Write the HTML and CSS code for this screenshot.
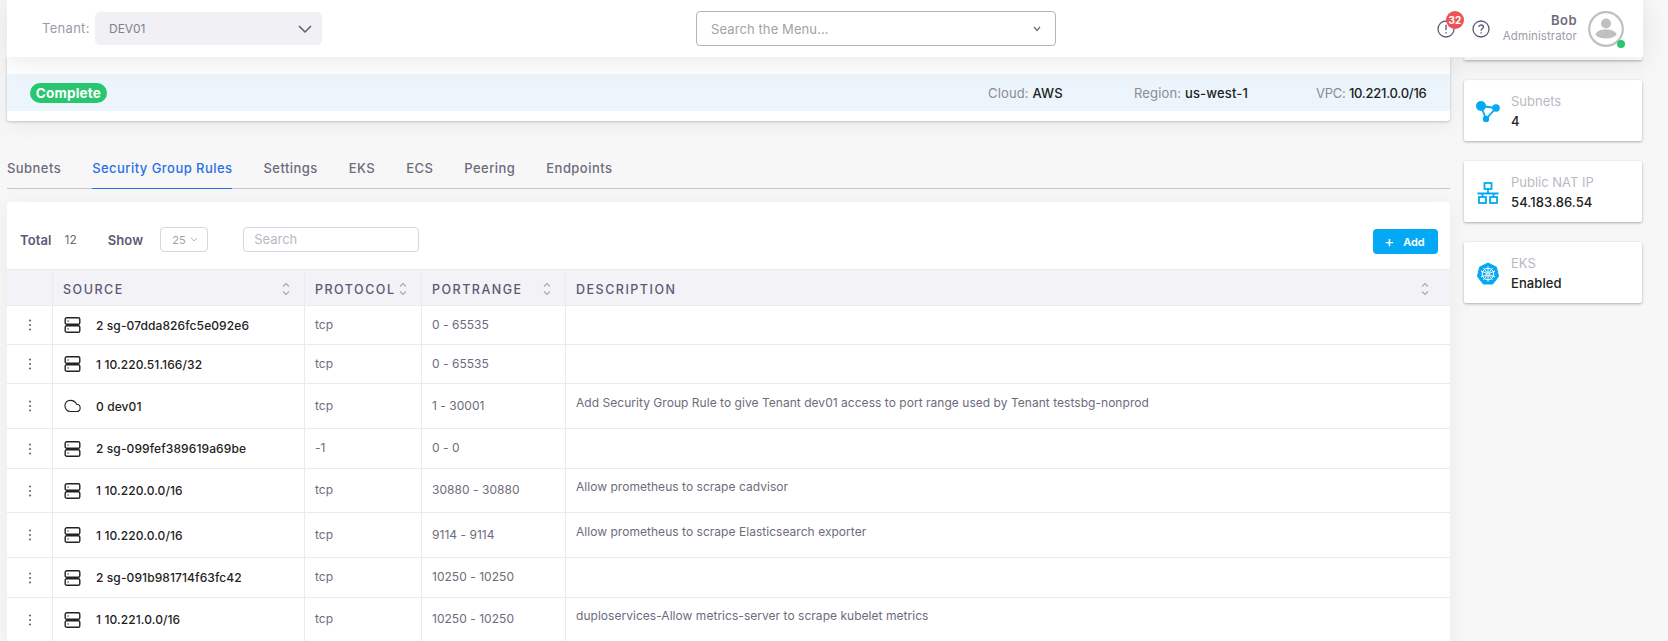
FILE: index.html
```html
<!DOCTYPE html>
<html lang="en">
<head>
<meta charset="UTF-8">
<meta name="viewport" content="width=device-width, initial-scale=1.0">
<title>VPC Details</title>
<link rel="stylesheet" href="styles.css">
</head>
<body>
<svg class="sprites" aria-hidden="true">
    <symbol id="server" viewBox="0 0 16 16">
        <rect x="0.7" y="0.7" width="14.6" height="6.6" rx="1.6" fill="none" stroke="currentColor" stroke-width="1.4"/>
        <rect x="0.7" y="8.7" width="14.6" height="6.6" rx="1.6" fill="none" stroke="currentColor" stroke-width="1.4"/>
        <rect x="3" y="3.4" width="1.2" height="1.2" fill="currentColor"/>
        <rect x="3" y="11.4" width="1.2" height="1.2" fill="currentColor"/>
    </symbol>
    <symbol id="cloud" viewBox="0 0 18 14">
        <path d="M6.5 1C3.4 1 1 3.6 1 6.8c0 3.3 2.5 6 5.6 6h6.6c2.2 0 3.9-1.7 3.9-3.8 0-2.1-1.6-3.7-3.7-3.8C12.400 2.700 9.800 1 6.500 1z" fill="none" stroke="currentColor" stroke-width="1.2"/>
    </symbol>
    <symbol id="dots" viewBox="0 0 4 14">
        <circle cx="2" cy="2.500" r="1.100" fill="currentColor"/>
        <circle cx="2" cy="7" r="1.100" fill="currentColor"/>
        <circle cx="2" cy="11.500" r="1.100" fill="currentColor"/>
    </symbol>
    <symbol id="sort" viewBox="0 0 8 14">
        <path d="M1 4.500L4 1.500L7 4.500M1 9.500L4 12.500L7 9.500" fill="none" stroke="currentColor" stroke-width="1.100"/>
    </symbol>
</svg>

<header class="topbar">
    <div class="tenant">
        <span class="tenant-label">Tenant:</span>
        <div class="tenant-select">
            <span>DEV01</span>
            <svg width="16" height="10" viewBox="0 0 16 10"><path d="M2 2l6 6 6-6" fill="none" stroke="#5e5873" stroke-width="1.500"/></svg>
        </div>
    </div>
    <div class="menu-search">
        <span>Search the Menu...</span>
        <svg width="8" height="6" viewBox="0 0 8 6"><path d="M1 1l3 3.500L7 1" fill="none" stroke="#6e6b7b" stroke-width="1.200"/></svg>
    </div>
    <div class="topbar-right">
        <div class="alert-icon">
            <svg width="18" height="18" viewBox="0 0 18 18"><circle cx="9" cy="9" r="8" fill="none" stroke="#5e5873" stroke-width="1.300"/><path d="M9 4.800v5.200M9 12.200v1.300" stroke="#5e5873" stroke-width="1.400"/></svg>
            <span class="badge">32</span>
        </div>
        <svg class="help-icon" width="18" height="18" viewBox="0 0 18 18"><circle cx="9" cy="9" r="8" fill="none" stroke="#5e5873" stroke-width="1.300"/><path d="M6.700 7c.2-1.300 1.200-2 2.400-2 1.300 0 2.300.8 2.300 2 0 1.800-2.400 1.800-2.400 3.800M9 12.300v1.300" fill="none" stroke="#5e5873" stroke-width="1.300"/></svg>
        <div class="user">
            <div class="user-name">Bob</div>
            <div class="user-role">Administrator</div>
        </div>
        <div class="avatar">
            <svg width="36" height="36" viewBox="0 0 36 36">
                <circle cx="18" cy="18" r="16.800" fill="none" stroke="#c0c0c0" stroke-width="2.200"/>
                <circle cx="18" cy="12.500" r="5" fill="#c0c0c0"/>
                <path d="M7.500 24c0-3.500 4.500-5.500 10.500-5.500s10.500 2 10.500 5.500c-2.500 2.500-6 3.500-10.500 3.500s-8-1-10.500-3.500z" fill="#c0c0c0"/>
            </svg>
            <span class="online"></span>
        </div>
    </div>
</header>

<div class="page">
    <main class="main">
        <section class="summary">
            <div class="summary-strip">
                <span class="status">Complete</span>
                <div class="summary-meta">
                    <span class="meta-cloud">Cloud: <b>AWS</b></span>
                    <span class="meta-region">Region: <b>us-west-1</b></span>
                    <span class="meta-vpc">VPC: <b>10.221.0.0/16</b></span>
                </div>
            </div>
        </section>

        <nav class="tabs">
            <a>Subnets</a>
            <a class="active">Security Group Rules</a>
            <a>Settings</a>
            <a>EKS</a>
            <a>ECS</a>
            <a>Peering</a>
            <a>Endpoints</a>
        </nav>

        <section class="table-card">
            <div class="toolbar">
                <span class="tool-label">Total</span>
                <span class="tool-count">12</span>
                <span class="tool-label tool-show">Show</span>
                <div class="page-size">
                    <span>25</span>
                    <svg width="8" height="5" viewBox="0 0 8 5"><path d="M1 1l3 3 3-3" fill="none" stroke="#b9b9c3"/></svg>
                </div>
                <div class="table-search">Search</div>
                <button class="add-btn"><span class="plus">+</span>Add</button>
            </div>
            <table>
                <colgroup>
                    <col class="col-menu">
                    <col class="col-source">
                    <col class="col-protocol">
                    <col class="col-port">
                    <col>
                </colgroup>
                <thead>
                    <tr>
                        <th></th>
                        <th><div class="th-in">SOURCE<svg class="sort"><use href="#sort"/></svg></div></th>
                        <th><div class="th-in">PROTOCOL<svg class="sort"><use href="#sort"/></svg></div></th>
                        <th><div class="th-in">PORTRANGE<svg class="sort"><use href="#sort"/></svg></div></th>
                        <th><div class="th-in th-last">DESCRIPTION<svg class="sort"><use href="#sort"/></svg></div></th>
                    </tr>
                </thead>
                <tbody>
                    <tr class="h39">
                        <td class="menu"><svg class="dots"><use href="#dots"/></svg></td>
                        <td><div class="src"><svg class="src-icon"><use href="#server"/></svg>2 sg-07dda826fc5e092e6</div></td>
                        <td>tcp</td><td>0 - 65535</td><td></td>
                    </tr>
                    <tr class="h39">
                        <td class="menu"><svg class="dots"><use href="#dots"/></svg></td>
                        <td><div class="src"><svg class="src-icon"><use href="#server"/></svg>1 10.220.51.166/32</div></td>
                        <td>tcp</td><td>0 - 65535</td><td></td>
                    </tr>
                    <tr class="h45">
                        <td class="menu"><svg class="dots"><use href="#dots"/></svg></td>
                        <td><div class="src"><svg class="src-icon"><use href="#cloud"/></svg>0 dev01</div></td>
                        <td>tcp</td><td>1 - 30001</td>
                        <td class="desc">Add Security Group Rule to give Tenant dev01 access to port range used by Tenant testsbg-nonprod</td>
                    </tr>
                    <tr class="h40">
                        <td class="menu"><svg class="dots"><use href="#dots"/></svg></td>
                        <td><div class="src"><svg class="src-icon"><use href="#server"/></svg>2 sg-099fef389619a69be</div></td>
                        <td>-1</td><td>0 - 0</td><td></td>
                    </tr>
                    <tr class="h44">
                        <td class="menu"><svg class="dots"><use href="#dots"/></svg></td>
                        <td><div class="src"><svg class="src-icon"><use href="#server"/></svg>1 10.220.0.0/16</div></td>
                        <td>tcp</td><td>30880 - 30880</td>
                        <td class="desc">Allow prometheus to scrape cadvisor</td>
                    </tr>
                    <tr class="h45">
                        <td class="menu"><svg class="dots"><use href="#dots"/></svg></td>
                        <td><div class="src"><svg class="src-icon"><use href="#server"/></svg>1 10.220.0.0/16</div></td>
                        <td>tcp</td><td>9114 - 9114</td>
                        <td class="desc">Allow prometheus to scrape Elasticsearch exporter</td>
                    </tr>
                    <tr class="h40">
                        <td class="menu"><svg class="dots"><use href="#dots"/></svg></td>
                        <td><div class="src"><svg class="src-icon"><use href="#server"/></svg>2 sg-091b981714f63fc42</div></td>
                        <td>tcp</td><td>10250 - 10250</td><td></td>
                    </tr>
                    <tr class="h44">
                        <td class="menu"><svg class="dots"><use href="#dots"/></svg></td>
                        <td><div class="src"><svg class="src-icon"><use href="#server"/></svg>1 10.221.0.0/16</div></td>
                        <td>tcp</td><td>10250 - 10250</td>
                        <td class="desc">duploservices-Allow metrics-server to scrape kubelet metrics</td>
                    </tr>
                </tbody>
            </table>
        </section>
    </main>

    <aside class="side">
        <div class="stat stat-hidden"></div>
        <div class="stat">
            <div class="stat-icon">
                <svg width="26" height="24" viewBox="0 0 26 24">
                    <path d="M6 6L21 8L11 19Z" fill="none" stroke="#03a9f4" stroke-width="1.800"/>
                    <circle cx="6" cy="6" r="5" fill="#03a9f4"/>
                    <circle cx="21" cy="8" r="3.800" fill="#03a9f4"/>
                    <circle cx="11" cy="19" r="3.200" fill="#03a9f4"/>
                </svg>
            </div>
            <div>
                <div class="stat-label">Subnets</div>
                <div class="stat-value">4</div>
            </div>
        </div>
        <div class="stat">
            <div class="stat-icon">
                <svg width="22" height="22" viewBox="0 0 22 22">
                    <g fill="none" stroke="#03a9f4" stroke-width="1.800">
                        <rect x="7.500" y="1" width="7" height="6"/>
                        <rect x="2" y="15" width="7" height="6"/>
                        <rect x="13" y="15" width="7" height="6"/>
                        <path d="M11 7v4.500M0.500 11.500h21M5.500 11.500V15M16.500 11.500V15"/>
                    </g>
                </svg>
            </div>
            <div>
                <div class="stat-label">Public NAT IP</div>
                <div class="stat-value">54.183.86.54</div>
            </div>
        </div>
        <div class="stat">
            <div class="stat-icon">
                <svg width="24" height="24" viewBox="0 0 24 24">
                    <path d="M12 1L20.500 5.200 22.500 14.500 16.700 22H7.300L1.500 14.500 3.500 5.200Z" fill="#03a9f4" stroke="#03a9f4" stroke-linejoin="round"/>
                    <g fill="none" stroke="#fff" stroke-width="1">
                        <circle cx="12" cy="12" r="5.800"/>
                        <circle cx="12" cy="12" r="1.300"/>
                        <path d="M12 4.500v6M12 13.500v6M5 9l5.700 2.300M13.300 12.700L19 15M19 9l-5.700 2.300M10.700 12.700L5 15M7.500 18l3.600-4.800M12.900 10.800L16.500 6M16.500 18l-3.600-4.800M11.100 10.800L7.500 6"/>
                    </g>
                </svg>
            </div>
            <div>
                <div class="stat-label">EKS</div>
                <div class="stat-value">Enabled</div>
            </div>
        </div>
    </aside>
</div>
</body>
</html>
```

FILE: styles.css
```css
* {
    box-sizing: border-box;
}
html, body {
    height: 100%;
}
body {
    margin: 0;
    background: #f7f7f7;
    font-family: Inter, "Liberation Sans", sans-serif;
    font-size: 12px;
    color: #6e6b7b;
    overflow: hidden;
}
.sprites {
    display: none;
}

/* top bar */
.topbar {
    position: relative;
    z-index: 2;
    display: flex;
    align-items: center;
    height: 57px;
    margin: 0 25px 0 7px;
    padding-left: 35px;
    background: #fff;
    box-shadow: 0 4px 24px rgba(34, 41, 47, 0.1);
}
.tenant {
    display: flex;
    align-items: center;
    width: 280px;
}
.tenant-label {
    width: 53px;
    font-size: 13px;
    letter-spacing: 0.3px;
    color: #9d9ba8;
    margin-top: -2px;
}
.tenant-select {
    display: flex;
    align-items: center;
    justify-content: space-between;
    width: 227px;
    height: 33px;
    padding: 0 9px 0 14px;
    background: #f0f0f5;
    border-radius: 5px;
    font-size: 12px;
    color: #82808e;
}
.menu-search {
    display: flex;
    align-items: center;
    justify-content: space-between;
    width: 360px;
    height: 35px;
    margin-left: 374px;
    padding: 0 14px;
    background: #fff;
    border: 1px solid #b5b5b5;
    border-radius: 4px;
    font-size: 13px;
    letter-spacing: 0.1px;
    color: #a3a3a3;
}
.topbar-right {
    display: flex;
    align-items: center;
    margin-left: auto;
    padding-right: 19px;
}
.alert-icon {
    position: relative;
    width: 18px;
    height: 18px;
}
.badge {
    position: absolute;
    top: -9px;
    left: 9px;
    width: 18px;
    height: 18px;
    border-radius: 50%;
    background: #ea5455;
    color: #fff;
    font-size: 10px;
    font-weight: 700;
    line-height: 18px;
    text-align: center;
}
.alert-icon svg, .help-icon {
    display: block;
}
.help-icon {
    margin-left: 17px;
}
.user {
    width: 87px;
    text-align: right;
}
.user-name {
    font-size: 13px;
    font-weight: 600;
    letter-spacing: 0.5px;
    color: #6e6b7b;
    line-height: 15px;
}
.user-role {
    font-size: 11.500px;
    letter-spacing: 0.1px;
    color: #9d9ba8;
    line-height: 16px;
}
.avatar {
    position: relative;
    width: 36px;
    height: 36px;
    margin-left: 11px;
}
.online {
    position: absolute;
    right: -1px;
    bottom: -1px;
    width: 8px;
    height: 8px;
    border-radius: 50%;
    background: #28c76f;
}

/* page layout */
.page {
    display: flex;
    align-items: flex-start;
    gap: 14px;
    padding: 0 26px 0 7px;
}
.main {
    width: 1443px;
    flex: none;
}
.side {
    display: flex;
    flex-direction: column;
    gap: 20px;
    width: 178px;
    flex: none;
}

/* summary card */
.summary {
    height: 64px;
    padding-top: 17px;
    background: #fff;
    border-radius: 0 0 3px 3px;
    box-shadow: 0 1px 3px rgba(0, 0, 0, 0.2), 0 4px 24px rgba(34, 41, 47, 0.06);
}
.summary-strip {
    display: flex;
    align-items: center;
    justify-content: space-between;
    height: 37px;
    padding: 0 23px;
    background: #ecf5fc;
}
.status {
    width: 77px;
    height: 20px;
    border-radius: 10px;
    background: #28c76f;
    color: #fff;
    font-size: 13.500px;
    font-weight: 700;
    letter-spacing: 0.2px;
    line-height: 20px;
    text-align: center;
}
.summary-meta {
    display: flex;
    font-size: 13px;
    letter-spacing: 0.15px;
    color: #8b8a92;
}
.summary-meta b {
    font-weight: 500;
    color: #222;
}
.meta-cloud {
    width: 146px;
}
.meta-region {
    width: 182px;
}
.meta-vpc {
    width: 111px;
    letter-spacing: -0.25px;
    white-space: nowrap;
}

/* tabs */
.tabs {
    display: flex;
    align-items: flex-start;
    gap: 31px;
    height: 68px;
    padding-top: 36px;
    border-bottom: 1px solid #c8c8cf;
    font-size: 13px;
    font-weight: 500;
    letter-spacing: 0.45px;
    color: #6e6b7b;
}
.tabs a {
    height: 32px;
    padding-top: 3px;
}
.tabs .active {
    color: #2a6fe8;
    border-bottom: 1px solid #2a6fe8;
}

/* table card */
.table-card {
    margin-top: 13px;
    background: #fff;
    border-radius: 4px 4px 0 0;
    box-shadow: 0 4px 24px rgba(34, 41, 47, 0.06);
}
.toolbar {
    display: flex;
    align-items: center;
    height: 67px;
    padding: 8px 12px 0 13px;
}
.tool-label {
    font-size: 13px;
    font-weight: 600;
    letter-spacing: 0.1px;
    color: #5e5873;
}
.tool-count {
    margin-left: 13px;
    font-size: 12px;
    color: #6e6b7b;
}
.tool-show {
    margin-left: 31px;
}
.page-size {
    display: flex;
    align-items: center;
    justify-content: space-between;
    width: 48px;
    height: 25px;
    margin-left: 17px;
    padding: 0 9px 0 11px;
    border: 1px solid #d8d6de;
    border-radius: 4px;
    font-size: 11px;
    color: #a3a1ad;
}
.table-search {
    width: 176px;
    height: 25px;
    margin-left: 35px;
    padding-left: 10px;
    border: 1px solid #d8d6de;
    border-radius: 4px;
    font-size: 13px;
    line-height: 23px;
    color: #b9b9c3;
}
.add-btn {
    display: flex;
    align-items: center;
    justify-content: center;
    width: 65px;
    height: 25px;
    margin-left: auto;
    margin-top: 4px;
    padding: 0 2px 0 0;
    border: 0;
    border-radius: 4px;
    background: #03a9f4;
    color: #fff;
    font-family: inherit;
    font-size: 11px;
    font-weight: 600;
}
.plus {
    margin-right: 9px;
    font-size: 15px;
    font-weight: 400;
    line-height: 1;
}

/* table */
table {
    width: 100%;
    table-layout: fixed;
    border-collapse: separate;
    border-spacing: 0;
}
.col-menu {
    width: 46px;
}
.col-source {
    width: 252px;
}
.col-protocol {
    width: 117px;
}
.col-port {
    width: 144px;
}
th {
    height: 37px;
    padding: 0;
    background: #f3f2f7;
    border-top: 1px solid #ebe9f1;
    border-bottom: 1px solid #ebe9f1;
    border-right: 1px solid #ebe9f1;
    font-size: 12.500px;
    font-weight: 500;
    letter-spacing: 1.500px;
    color: #5e5873;
    text-align: left;
}
th:last-child, td:last-child {
    border-right: 0;
}
.th-in {
    display: flex;
    align-items: center;
    justify-content: space-between;
    padding: 3px 14px 0 10px;
}
.th-last {
    padding: 3px 21px 0 10px;
}
.sort {
    flex: none;
    width: 8px;
    height: 14px;
    color: #a9a7b5;
}
td {
    padding: 0 10px 2px;
    background: #fff;
    border-bottom: 1px solid #ebe9f1;
    border-right: 1px solid #ebe9f1;
    font-size: 12px;
    letter-spacing: 0.035px;
    white-space: nowrap;
}
.h39 td {
    height: 39px;
}
.h40 td {
    height: 40px;
}
.h44 td {
    height: 44px;
}
.h45 td {
    height: 45px;
}
td.menu {
    padding: 0;
    text-align: center;
}
.dots {
    display: block;
    width: 4px;
    height: 14px;
    margin: 0 auto;
    color: #6e6b7b;
}
.src {
    display: flex;
    align-items: center;
    margin-bottom: -2px;
    padding-left: 1px;
    color: #222;
    font-weight: 500;
    letter-spacing: 0.1px;
}
.src-icon {
    flex: none;
    width: 17px;
    height: 16px;
    margin-right: 15px;
}
td.desc {
    padding-bottom: 8px;
}

/* side cards */
.stat {
    display: flex;
    align-items: center;
    height: 61px;
    background: #fff;
    border-radius: 2px;
    box-shadow: 0 1px 3px rgba(0, 0, 0, 0.3);
}
.stat-hidden {
    height: 3px;
}
.stat-icon {
    display: flex;
    align-items: center;
    justify-content: center;
    flex: none;
    width: 47px;
    padding-top: 2px;
}
.stat-label {
    font-size: 13px;
    color: #b9b9c3;
    line-height: 20px;
}
.stat-value {
    font-size: 13px;
    font-weight: 500;
    letter-spacing: 0.1px;
    color: #222;
    line-height: 20px;
}
```
